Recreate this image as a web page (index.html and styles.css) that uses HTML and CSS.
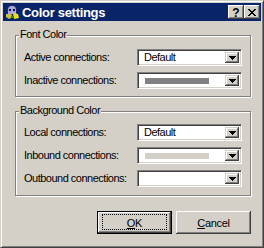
FILE: index.html
```html
<!DOCTYPE html>
<html lang="en">
<head>
    <meta charset="UTF-8">
    <title>Color settings</title>
    <link rel="stylesheet" href="styles.css">
</head>
<body>
    <div class="window">
        <!-- Caption bar -->
        <div class="titlebar">
            <svg class="app_icon" width="16" height="16" viewBox="0 0 16 16">
                <path d="M3 6 Q3 1 8 1 Q13 1 13 6 L13 11 L3 11 Z" fill="#2a2a6e"/>
                <path d="M4 6 Q4 2 8 2 Q12 2 12 6 L12 10 L4 10 Z" fill="#a8a8dc"/>
                <rect x="5" y="5" width="2" height="2" fill="#101040"/>
                <rect x="9" y="5" width="2" height="2" fill="#101040"/>
                <path d="M2 10 L7 10 L9 13 L5 15 L2 13 Z" fill="#c8c040"/>
                <path d="M9 9 L14 10 L15 14 L10 15 Z" fill="#e8e020"/>
                <rect x="7" y="12" width="2" height="2" fill="#408040"/>
            </svg>
            <span class="caption">Color settings</span>
            <div class="caption_buttons">
                <div class="cap_btn help">?</div>
                <div class="cap_btn close">
                    <svg width="8" height="7" viewBox="0 0 8 7">
                        <path d="M0 0h2v1h-2zM6 0h2v1h-2zM1 1h2v1h-2zM5 1h2v1h-2zM2 2h4v1h-4zM3 3h2v1h-2zM2 4h4v1h-4zM1 5h2v1h-2zM5 5h2v1h-2zM0 6h2v1h-2zM6 6h2v1h-2z" fill="#000"/>
                    </svg>
                </div>
            </div>
        </div>

        <div class="client">
            <!-- Font colours -->
            <div class="group">
                <span class="group_title">Font Color</span>
                <div class="row">
                    <span class="label">Active connections:</span>
                    <div class="combo">
                        <div class="value">Default</div>
                        <div class="drop"><svg width="7" height="4"><path d="M0 0h7v1h-7zM1 1h5v1h-5zM2 2h3v1h-3zM3 3h1v1h-1z" fill="#000"/></svg></div>
                    </div>
                </div>
                <div class="row">
                    <span class="label">Inactive connections:</span>
                    <div class="combo">
                        <div class="value"><div class="swatch dark"></div></div>
                        <div class="drop"><svg width="7" height="4"><path d="M0 0h7v1h-7zM1 1h5v1h-5zM2 2h3v1h-3zM3 3h1v1h-1z" fill="#000"/></svg></div>
                    </div>
                </div>
            </div>

            <!-- Background colours -->
            <div class="group second">
                <span class="group_title">Background Color</span>
                <div class="row">
                    <span class="label">Local connections:</span>
                    <div class="combo">
                        <div class="value">Default</div>
                        <div class="drop"><svg width="7" height="4"><path d="M0 0h7v1h-7zM1 1h5v1h-5zM2 2h3v1h-3zM3 3h1v1h-1z" fill="#000"/></svg></div>
                    </div>
                </div>
                <div class="row">
                    <span class="label">Inbound connections:</span>
                    <div class="combo">
                        <div class="value"><div class="swatch light"></div></div>
                        <div class="drop"><svg width="7" height="4"><path d="M0 0h7v1h-7zM1 1h5v1h-5zM2 2h3v1h-3zM3 3h1v1h-1z" fill="#000"/></svg></div>
                    </div>
                </div>
                <div class="row">
                    <span class="label">Outbound connections:</span>
                    <div class="combo">
                        <div class="value"></div>
                        <div class="drop"><svg width="7" height="4"><path d="M0 0h7v1h-7zM1 1h5v1h-5zM2 2h3v1h-3zM3 3h1v1h-1z" fill="#000"/></svg></div>
                    </div>
                </div>
            </div>

            <div class="actions">
                <button type="button" class="btn default"><span class="focus_rect"></span><u>O</u>K</button>
                <button type="button" class="btn"><u>C</u>ancel</button>
            </div>
        </div>
    </div>
</body>
</html>
```

FILE: styles.css
```css
* {
    margin: 0;
    padding: 0;
    box-sizing: border-box;
}

body {
    background-color: #d4d0c8;
    font-family: "Liberation Sans", Arial, sans-serif;
    font-size: 11px;
    letter-spacing: -0.5px;
    color: #000;
}

.window {
    width: 264px;
    height: 248px;
    padding: 2px;
    display: flex;
    flex-direction: column;
    background-color: #d4d0c8;
    border: 1px solid;
    border-color: #d4d0c8 #404040 #404040 #d4d0c8;
    box-shadow: inset 1px 1px #fff, inset -1px -1px #808080;
}

/* Caption */
.titlebar {
    height: 18px;
    display: flex;
    align-items: center;
    padding: 0 1px 0 1px;
    background-color: #0a246a;
    color: #fff;
}

.app_icon {
    display: block;
    flex: none;
}

.caption {
    margin-left: 2px;
    font-weight: bold;
    font-size: 13px;
    letter-spacing: -0.3px;
    flex: 1;
}

.caption_buttons {
    display: flex;
}

.cap_btn {
    width: 16px;
    height: 14px;
    display: flex;
    align-items: center;
    justify-content: center;
    background-color: #d4d0c8;
    color: #000;
    box-shadow: inset -1px -1px #404040, inset 1px 1px #fff, inset -2px -2px #808080, inset 2px 2px #d4d0c8;
}

.cap_btn.help {
    font-weight: bold;
    font-size: 12px;
    letter-spacing: 0;
    line-height: 14px;
    padding-top: 1px;
}

.cap_btn svg {
    display: block;
}

/* Client area */
.client {
    flex: 1;
    display: flex;
    flex-direction: column;
    padding: 14px 10px 0 12px;
}

.group {
    position: relative;
    display: flex;
    flex-direction: column;
    gap: 6px;
    padding: 13px 8px 7px 8px;
    border: 1px solid #808080;
    box-shadow: 1px 1px 0 #fff, inset 1px 1px 0 #fff;
}

.group.second {
    margin-top: 14px;
    padding-top: 12px;
    padding-bottom: 8px;
}

.group_title {
    position: absolute;
    top: -8px;
    left: 3px;
    padding: 0 1px;
    line-height: 13px;
    background-color: #d4d0c8;
}

.row {
    display: flex;
    align-items: center;
}

.label {
    flex: 1;
    line-height: 13px;
    white-space: nowrap;
}

/* Combo boxes */
.combo {
    width: 105px;
    height: 17px;
    display: flex;
    padding: 2px;
    background-color: #fff;
    border: 1px solid;
    border-color: #808080 #fff #fff #808080;
    box-shadow: inset 1px 1px #404040, inset -1px -1px #d4d0c8;
}

.value {
    flex: 1;
    display: flex;
    align-items: center;
    padding-left: 4px;
    line-height: 13px;
}

.swatch {
    width: 64px;
    height: 6px;
    margin-left: 1px;
}

.swatch.dark { background-color: #808080; }
.swatch.light { background-color: #d4d0c8; }

.drop {
    width: 14px;
    display: flex;
    align-items: center;
    justify-content: center;
    background-color: #d4d0c8;
    box-shadow: inset -1px -1px #404040, inset 1px 1px #d4d0c8, inset -2px -2px #808080, inset 2px 2px #fff;
}

.drop svg {
    display: block;
    margin-top: 1px;
}

/* Dialog buttons */
.actions {
    display: flex;
    justify-content: flex-end;
    gap: 4px;
    margin-top: 15px;
}

.btn {
    position: relative;
    width: 75px;
    height: 23px;
    border: none;
    background-color: #d4d0c8;
    font-family: "Liberation Sans", Arial, sans-serif;
    font-size: 11px;
    letter-spacing: -0.3px;
    color: #000;
    box-shadow: inset -1px -1px #404040, inset 1px 1px #fff, inset -2px -2px #808080, inset 2px 2px #d4d0c8;
}

.btn.default {
    border: 1px solid #000;
}

.focus_rect {
    position: absolute;
    top: 2px;
    left: 4px;
    right: 4px;
    bottom: 3px;
    border: 1px dotted #000;
}
```
